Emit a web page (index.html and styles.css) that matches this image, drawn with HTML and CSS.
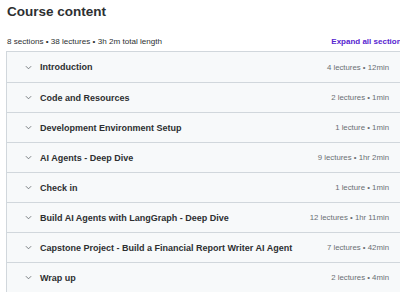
FILE: index.html
```html
<!DOCTYPE html>
<html lang="en">
<head>
    <meta charset="UTF-8">
    <title>Course content</title>
    <link rel="stylesheet" href="styles.css">
</head>
<body>
<div class="page">
    <h2 class="title">Course content</h2>
    <div class="summary">
        <span class="stats">8 sections • 38 lectures • 3h 2m total length</span>
        <span class="expand">Expand all sections</span>
    </div>
    <ul class="sections">
        <li><span class="chev"><svg viewBox="0 0 8 5" width="7" height="5"><path d="M1 1l3 3 3-3" fill="none" stroke="#6a6f73" stroke-width="1"/></svg></span><span class="name">Introduction</span><span class="meta">4 lectures • 12min</span></li>
        <li><span class="chev"><svg viewBox="0 0 8 5" width="7" height="5"><path d="M1 1l3 3 3-3" fill="none" stroke="#6a6f73" stroke-width="1"/></svg></span><span class="name">Code and Resources</span><span class="meta">2 lectures • 1min</span></li>
        <li><span class="chev"><svg viewBox="0 0 8 5" width="7" height="5"><path d="M1 1l3 3 3-3" fill="none" stroke="#6a6f73" stroke-width="1"/></svg></span><span class="name">Development Environment Setup</span><span class="meta">1 lecture • 1min</span></li>
        <li><span class="chev"><svg viewBox="0 0 8 5" width="7" height="5"><path d="M1 1l3 3 3-3" fill="none" stroke="#6a6f73" stroke-width="1"/></svg></span><span class="name">AI Agents - Deep Dive</span><span class="meta">9 lectures • 1hr 2min</span></li>
        <li><span class="chev"><svg viewBox="0 0 8 5" width="7" height="5"><path d="M1 1l3 3 3-3" fill="none" stroke="#6a6f73" stroke-width="1"/></svg></span><span class="name">Check in</span><span class="meta">1 lecture • 1min</span></li>
        <li><span class="chev"><svg viewBox="0 0 8 5" width="7" height="5"><path d="M1 1l3 3 3-3" fill="none" stroke="#6a6f73" stroke-width="1"/></svg></span><span class="name">Build AI Agents with LangGraph - Deep Dive</span><span class="meta">12 lectures • 1hr 11min</span></li>
        <li><span class="chev"><svg viewBox="0 0 8 5" width="7" height="5"><path d="M1 1l3 3 3-3" fill="none" stroke="#6a6f73" stroke-width="1"/></svg></span><span class="name">Capstone Project - Build a Financial Report Writer AI Agent</span><span class="meta">7 lectures • 42min</span></li>
        <li><span class="chev"><svg viewBox="0 0 8 5" width="7" height="5"><path d="M1 1l3 3 3-3" fill="none" stroke="#6a6f73" stroke-width="1"/></svg></span><span class="name">Wrap up</span><span class="meta">2 lectures • 4min</span></li>
    </ul>
</div>
</body>
</html>
```

FILE: styles.css
```css
* {
    margin: 0;
    padding: 0;
    box-sizing: border-box;
}

html, body {
    overflow: hidden;
    background: #fff;
}

body {
    font-family: "Liberation Sans", Arial, sans-serif;
    color: #2d2f31;
}

.page {
    width: 420px;
    padding-left: 6px;
}

.title {
    font-size: 13.5px;
    font-weight: bold;
    line-height: 18px;
    padding: 3px 0 0 1px;
    height: 31px;
    color: #2d2f31;
}

.summary {
    width: 400px;
    display: flex;
    justify-content: space-between;
    align-items: center;
    height: 20px;
    padding-left: 1px;
    font-size: 8.1px;
    color: #2d2f31;
}

.expand {
    color: #5624d0;
    font-weight: bold;
    font-size: 8px;
}

.sections {
    width: 400px;
    border: 1px solid #d1d7dc;
    list-style: none;
}

.sections li {
    display: flex;
    align-items: center;
    height: 30px;
    padding: 0 16px 0 18px;
    background: #f7f9fa;
    font-size: 9px;
}

.sections li + li {
    border-top: 1px solid #d1d7dc;
}

.chev {
    width: 15px;
    display: flex;
    align-items: center;
}

.name {
    flex: 1;
    font-weight: bold;
    color: #2d2f31;
}

.meta {
    color: #6a6f73;
    font-size: 7.8px;
}
```
